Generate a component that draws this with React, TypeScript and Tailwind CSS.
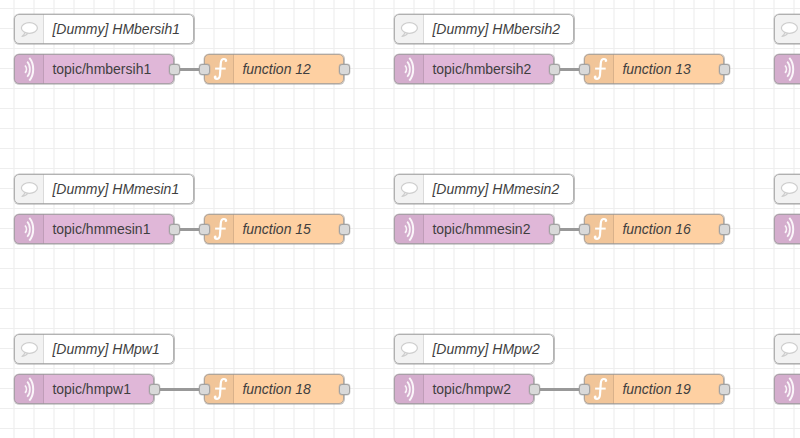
type Kind = "comment" | "mqtt" | "function";

const FILL: Record<Kind, string> = {
  comment: "bg-white",
  mqtt: "bg-[#e0b7d8]",
  function: "bg-[#fed0a2]",
};

function Icon({ kind }: { kind: Kind }) {
  if (kind === "comment") {
    return (
      <svg viewBox="0 0 30 30" className="size-[30px] shrink-0" fill="none">
        <path
          d="M11 18.4c-.4 1.7-1.4 2.9-3 4 2.6-.3 4.6-1.3 6-3.4"
          fill="#efefef"
          stroke="#cdcdcd"
          strokeWidth="1.2"
          strokeLinejoin="round"
        />
        <ellipse cx="15.4" cy="14" rx="8" ry="5.3" fill="#fff" stroke="#cdcdcd" strokeWidth="1.2" />
      </svg>
    );
  }
  if (kind === "mqtt") {
    return (
      <svg viewBox="0 0 30 30" className="size-[30px] shrink-0" fill="none" stroke="#fff" strokeOpacity="0.88">
        <path d="M15.3 3.8c5.2 6 5.2 16.8 0 22.8" strokeWidth="2" />
        <path d="M13.2 7.6c3.6 4 3.6 11.2 0 15.2" strokeWidth="1.7" />
        <path d="M11 11.5c1.9 2.1 1.9 5.3 0 7.4" strokeWidth="1.7" />
      </svg>
    );
  }
  return (
    <svg viewBox="0 0 30 30" className="size-[30px] shrink-0" fill="none" stroke="#fff">
      <path
        d="M22.2 7.2c-.1-1.6-1-2.2-2.3-2.2-2.2 0-2.9 1.7-3.1 4.3l-.8 11.2c-.2 2.8-1.1 4.3-2.9 4.3-1.5 0-2.3-.7-2.3-2.4"
        strokeWidth="2.2"
      />
      <path d="M11.1 14.6h10.6" strokeWidth="2" />
      <circle cx="21.8" cy="7" r="1.1" fill="#fff" stroke="none" />
      <circle cx="11.3" cy="22.8" r="1.2" fill="#fff" stroke="none" />
    </svg>
  );
}

function Port({ x, y }: { x: number; y: number }) {
  return (
    <div
      className="absolute size-[11px] rounded-[3px] border border-[#a3a3a3] bg-[#d9d9d9] shadow-[0_0_0_0.4px_rgba(153,153,153,0.5)]"
      style={{ left: x - 5, top: y - 5 }}
    />
  );
}

function Node({ kind, x, y, w, label }: { kind: Kind; x: number; y: number; w: number; label?: string }) {
  return (
    <div className={`absolute h-[30px] rounded-[5px] ${FILL[kind]}`} style={{ left: x, top: y, width: w }}>
      <div className="flex h-full items-center">
        <div className="h-full w-[30px] shrink-0 rounded-l-[5px] border-r border-black/10 bg-black/5">
          <Icon kind={kind} />
        </div>
        {label && (
          <span
            className={`pl-[8.4px] text-[14px] leading-[30px] whitespace-nowrap text-[#3f3f3f] ${
              kind === "mqtt" ? "" : "italic"
            }`}
          >
            {label}
          </span>
        )}
      </div>
      <div className="absolute inset-0 rounded-[5px] border border-[#999]/75 shadow-[0.3px_0.1px_0_0.7px_rgba(153,153,153,0.6)]" />
    </div>
  );
}

const COLS = [14, 394];
const EDGE_COL = 774;
const ROWS = [
  { y: 14, name: "bersih", commentW: 180, topicW: 160, fn: 12 },
  { y: 174, name: "mesin", commentW: 180, topicW: 160, fn: 15 },
  { y: 334, name: "pw", commentW: 160, topicW: 140, fn: 18 },
];

export default function App() {
  return (
    <div
      className="relative h-[438px] w-[800px] overflow-hidden bg-white bg-[linear-gradient(to_bottom,#eeeeee_1px,transparent_1px),linear-gradient(to_right,#f5f5f5_2px,transparent_2px)] bg-[size:20px_20px] bg-[position:0_8px,13px_0]"
      style={{ fontFamily: '"Liberation Sans", Arial, sans-serif' }}
    >
      {ROWS.map((row) =>
        COLS.map((x, c) => {
          const mid = row.y + 55;
          return (
            <div key={`${row.name}${c}`}>
              <div
                className="absolute h-[3px] bg-[#999]"
                style={{ left: x + row.topicW, top: mid - 1.5, width: 190 - row.topicW }}
              />
              <Node kind="comment" x={x} y={row.y} w={row.commentW} label={`[Dummy] HM${row.name}${c + 1}`} />
              <Node kind="mqtt" x={x} y={row.y + 40} w={row.topicW} label={`topic/hm${row.name}${c + 1}`} />
              <Node kind="function" x={x + 190} y={row.y + 40} w={140} label={`function ${row.fn + c}`} />
              <Port x={x + row.topicW} y={mid} />
              <Port x={x + 190} y={mid} />
              <Port x={x + 330} y={mid} />
            </div>
          );
        }),
      )}
      {/* Only the icon cells of the third column fall inside the viewport */}
      {ROWS.map((row) => (
        <div key={row.name}>
          <Node kind="comment" x={EDGE_COL} y={row.y} w={row.commentW} />
          <Node kind="mqtt" x={EDGE_COL} y={row.y + 40} w={row.topicW} />
        </div>
      ))}
    </div>
  );
}
